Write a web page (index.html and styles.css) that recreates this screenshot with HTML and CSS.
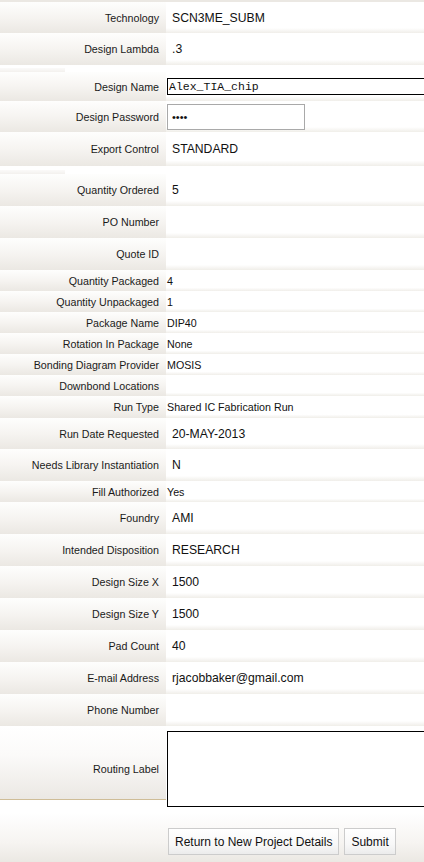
FILE: index.html
```html
<!DOCTYPE html>
<html>
<head>
<meta charset="utf-8">
<link rel="stylesheet" href="styles.css">
</head>
<body>
<div class="form">
  <div class="band"></div>
  <div class="row h31"><div class="label">Technology</div><div class="value big">SCN3ME_SUBM</div></div>
  <div class="row"><div class="label">Design Lambda</div><div class="value big">.3</div></div>
  <div class="spacer"><div class="spacer-mark"></div></div>
  <div class="row h29"><div class="label">Design Name</div><div class="value"><input class="name-input" type="text" value="Alex_TIA_chip"></div></div>
  <div class="row h31"><div class="label">Design Password</div><div class="value"><input class="pw-input" type="text" value="••••"></div></div>
  <div class="row h34"><div class="label">Export Control</div><div class="value big">STANDARD</div></div>
  <div class="spacer s8"><div class="spacer-mark"></div></div>
  <div class="row"><div class="label">Quantity Ordered</div><div class="value big">5</div></div>
  <div class="row"><div class="label">PO Number</div><div class="value big"></div></div>
  <div class="row"><div class="label">Quote ID</div><div class="value big"></div></div>
  <div class="row short"><div class="label">Quantity Packaged</div><div class="value">4</div></div>
  <div class="row short"><div class="label">Quantity Unpackaged</div><div class="value">1</div></div>
  <div class="row short"><div class="label">Package Name</div><div class="value">DIP40</div></div>
  <div class="row short"><div class="label">Rotation In Package</div><div class="value">None</div></div>
  <div class="row short"><div class="label">Bonding Diagram Provider</div><div class="value">MOSIS</div></div>
  <div class="row short"><div class="label">Downbond Locations</div><div class="value"></div></div>
  <div class="row short h22"><div class="label">Run Type</div><div class="value">Shared IC Fabrication Run</div></div>
  <div class="row h31"><div class="label">Run Date Requested</div><div class="value big">20-MAY-2013</div></div>
  <div class="row"><div class="label">Needs Library Instantiation</div><div class="value big">N</div></div>
  <div class="row short"><div class="label">Fill Authorized</div><div class="value">Yes</div></div>
  <div class="row"><div class="label">Foundry</div><div class="value big">AMI</div></div>
  <div class="row"><div class="label">Intended Disposition</div><div class="value big">RESEARCH</div></div>
  <div class="row"><div class="label">Design Size X</div><div class="value big">1500</div></div>
  <div class="row"><div class="label">Design Size Y</div><div class="value big">1500</div></div>
  <div class="row"><div class="label">Pad Count</div><div class="value big">40</div></div>
  <div class="row"><div class="label">E-mail Address</div><div class="value big">rjacobbaker@gmail.com</div></div>
  <div class="row"><div class="label">Phone Number</div><div class="value big"></div></div>
  <div class="routing"><div class="label route-label">Routing Label</div><div class="route-cell"><textarea class="route-area" aria-label="Routing Label"></textarea></div></div>
  <div class="actions">
    <button class="btn" type="button">Return to New Project Details</button>
    <button class="btn" type="button">Submit</button>
  </div>
</div>
</body>
</html>
```
FILE: styles.css
```css
html, body {
  margin: 0;
  padding: 0;
  background: #ffffff;
}

.form {
  width: 424px;
  height: 862px;
  overflow: hidden;
  font-family: "Liberation Sans", Arial, sans-serif;
  font-size: 10.7px;
  color: #1a1a1a;
}

.band {
  height: 2px;
  background: #ebe8e3;
}

.row {
  display: flex;
  height: 32px;
}

.row.h22 { height: 22px; }
.row.h29 { height: 29px; }
.row.h31 { height: 31px; }
.row.h34 { height: 34px; }
.row.short { height: 21px; }
.row.short.h22 { height: 22px; }

.label {
  flex: none;
  width: 166px;
  box-sizing: border-box;
  padding-right: 7px;
  display: flex;
  align-items: center;
  justify-content: flex-end;
  white-space: nowrap;
  background: linear-gradient(to bottom, #fefefd 0%, #f6f4f1 50%, #ebe8e3 100%);
}

.value {
  flex: 1;
  min-width: 0;
  display: flex;
  align-items: center;
  padding-left: 1px;
  white-space: nowrap;
  color: #111111;
  background: linear-gradient(to bottom, #ffffff 0%, #ffffff 84%, #f0eee9 100%);
}

.value.big {
  font-size: 12.2px;
  padding-left: 6px;
}

.spacer {
  height: 7px;
  background: #ffffff;
  display: flex;
  align-items: flex-end;
}

.spacer.s8 {
  height: 8px;
}

.spacer-mark {
  width: 65px;
  height: 4px;
  background: linear-gradient(to bottom, #fbfaf9, #f3f1ee);
}

.name-input {
  flex: none;
  box-sizing: border-box;
  width: 280px;
  height: 17px;
  margin: 0;
  padding: 0 0 0 1px;
  border: 1px solid #000000;
  font-family: "Liberation Mono", "Courier New", monospace;
  font-size: 11.5px;
  color: #111111;
  background: #ffffff;
  outline: none;
}

.pw-input {
  flex: none;
  box-sizing: border-box;
  width: 138px;
  height: 26px;
  margin: 0;
  padding: 0 0 0 4px;
  border: 1px solid #a9a9a9;
  font-family: "Liberation Sans", Arial, sans-serif;
  font-size: 11px;
  color: #111111;
  background: #ffffff;
  outline: none;
}

.routing {
  display: flex;
  align-items: flex-start;
  height: 81px;
  background: #ffffff;
}

.route-label {
  height: 74px;
  padding-top: 13px;
  border-bottom: 1px solid #cfbd97;
  background: linear-gradient(to bottom, #ffffff 0%, #fbfaf9 40%, #ebe8e3 100%);
}

.route-cell {
  flex: none;
  width: 300px;
  padding: 5px 0 0 1px;
}

.route-area {
  display: block;
  box-sizing: border-box;
  width: 300px;
  height: 76px;
  margin: 0;
  padding: 0;
  border: 1px solid #000000;
  resize: none;
  background: #ffffff;
  outline: none;
}

.actions {
  height: 55px;
  box-sizing: border-box;
  padding: 21px 0 0 168px;
  display: flex;
  align-items: flex-start;
  gap: 5px;
  background: linear-gradient(to bottom, #ffffff 0%, #ffffff 10%, #f6f4f1 65%, #ebe8e3 100%);
}

.btn {
  box-sizing: border-box;
  height: 27px;
  margin: 0;
  padding: 0 6px;
  border: 1px solid #cccccc;
  border-radius: 0;
  font-family: "Liberation Sans", Arial, sans-serif;
  font-size: 12px;
  color: #111111;
  background: linear-gradient(to bottom, #ffffff 0%, #f8f8f8 60%, #ececec 100%);
}
```
